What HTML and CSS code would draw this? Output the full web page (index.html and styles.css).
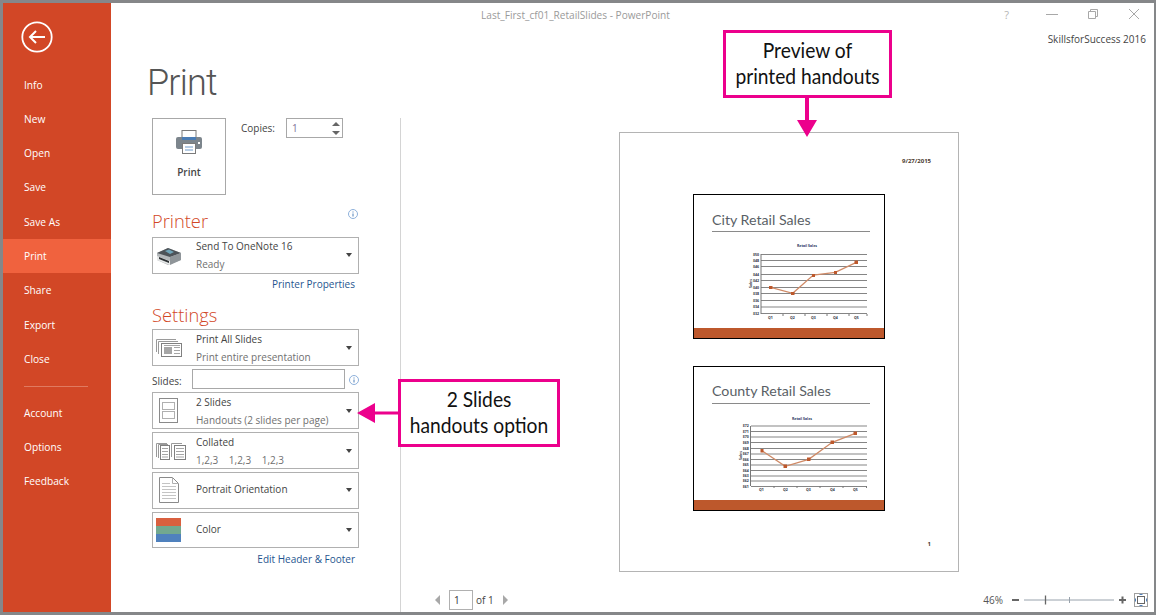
FILE: index.html
```html
<!DOCTYPE html>
<html>

<head>
  <meta charset="utf-8" />
  <title>Print - PowerPoint</title>
  <link rel="stylesheet" href="styles.css">
</head>

<body>
  <div class="window">
    <nav class="sidebar">
      <div class="back">
        <svg width="32" height="32" viewBox="0 0 32 32">
          <circle cx="16" cy="16" r="14.7" fill="none" stroke="#fff" stroke-width="1.8" />
          <path d="M9 16H24M15 10L9 16L15 22" fill="none" stroke="#fff" stroke-width="2" />
        </svg>
      </div>
      <a class="item">Info</a>
      <a class="item">New</a>
      <a class="item">Open</a>
      <a class="item">Save</a>
      <a class="item">Save As</a>
      <a class="item active">Print</a>
      <a class="item">Share</a>
      <a class="item">Export</a>
      <a class="item">Close</a>
      <div class="sep"></div>
      <a class="item">Account</a>
      <a class="item">Options</a>
      <a class="item">Feedback</a>
    </nav>

    <div class="main">
      <div class="titlebar">
        <span class="doc-title">Last_First_cf01_RetailSlides - PowerPoint</span>
        <div class="controls">
          <span class="help">?</span>
          <svg width="12" height="12" viewBox="0 0 12 12"><path d="M0 6.5H12" stroke="#a8a8a8" /></svg>
          <svg width="12" height="12" viewBox="0 0 12 12"><path d="M1.500 3.500H8.500V10.500H1.500ZM3.500 3.500V1.500H10.500V8.500H8.500" fill="none" stroke="#a8a8a8" /></svg>
          <svg width="12" height="12" viewBox="0 0 12 12"><path d="M1 1L11 11M11 1L1 11" stroke="#a8a8a8" /></svg>
        </div>
      </div>
      <div class="account">SkillsforSuccess 2016</div>
      <h1 class="page-title">Print</h1>

      <div class="backstage">
        <div class="panel">
          <div class="print-row">
            <button class="print-btn">
              <svg width="26" height="24" viewBox="0 0 26 24">
                <rect x="6" y="0.500" width="14" height="9" fill="#fff" stroke="#7b7b7b" />
                <rect x="0" y="7" width="26" height="12" rx="2" fill="#7c858c" />
                <rect x="6" y="7" width="14" height="3" fill="#4b7db5" />
                <rect x="6.500" y="13.500" width="13" height="10" fill="#fff" stroke="#7b7b7b" />
                <path d="M9 17H17M9 20H17" stroke="#6f9bcb" />
                <rect x="22" y="12" width="2" height="2" fill="#fff" />
              </svg>
              <span>Print</span>
            </button>
            <div class="copies">
              <label>Copies:</label>
              <div class="spinner">
                <span>1</span>
                <svg width="8" height="15" viewBox="0 0 8 15"><path d="M4 1L8 5H0ZM0 10H8L4 14Z" fill="#666" /></svg>
              </div>
            </div>
          </div>

          <div class="section-title printer-title">
            <span>Printer</span>
            <svg class="info" width="10" height="10" viewBox="0 0 10 10"><circle cx="5" cy="5" r="4.500" fill="none" stroke="#8db0da" /><path d="M5 2.500V3.500M5 4.500V7.500" stroke="#4d7fb8" /></svg>
          </div>
          <div class="dropdown">
            <div class="dd-icon">
              <svg width="26" height="21" viewBox="0 0 26 21">
                <path d="M1 8L12 3L25 8V15L12 20L1 15Z" fill="#b4b8ba" />
                <path d="M1 8L12 3L25 8L14 12Z" fill="#4d5358" />
                <path d="M9 6L13 4.500L18 7L14 9Z" fill="#6fa4b8" />
                <path d="M1 11L14 16V20L1 15Z" fill="#e6e8e8" />
                <path d="M3 12L13 16V18L3 14Z" fill="#2e3235" />
                <path d="M14 12L25 8V15L14 20Z" fill="#8f9599" />
              </svg>
            </div>
            <div class="dd-text">
              <div>Send To OneNote 16</div>
              <div class="sub">Ready</div>
            </div>
            <i class="caret"></i>
          </div>
          <a class="link">Printer Properties</a>

          <div class="section-title settings-title">Settings</div>
          <div class="dropdown">
            <div class="dd-icon">
              <svg width="26" height="18" viewBox="0 0 26 18">
                <path d="M0.500 13V0.500H20M2.500 15V2.500H22" fill="none" stroke="#9a9a9a" />
                <rect x="5.500" y="4.500" width="20" height="13" fill="#fff" stroke="#808080" />
                <rect x="8" y="8" width="8" height="7" fill="#a6a6a6" />
                <path d="M18 8.500H24M18 11.500H24M18 14.500H24" stroke="#a6a6a6" />
                <path d="M8 6.500H24" stroke="#a6a6a6" />
              </svg>
            </div>
            <div class="dd-text">
              <div>Print All Slides</div>
              <div class="sub">Print entire presentation</div>
            </div>
            <i class="caret"></i>
          </div>
          <div class="slides-row">
            <label>Slides:</label>
            <div class="slides-input"></div>
            <svg class="info" width="10" height="10" viewBox="0 0 10 10"><circle cx="5" cy="5" r="4.500" fill="none" stroke="#8db0da" /><path d="M5 2.500V3.500M5 4.500V7.500" stroke="#4d7fb8" /></svg>
          </div>
          <div class="dropdown">
            <div class="dd-icon">
              <svg width="26" height="25" viewBox="0 0 26 25">
                <rect x="3.500" y="0.500" width="18" height="24" fill="#fff" stroke="#8a8a8a" />
                <rect x="6.500" y="4.500" width="12" height="7" fill="#fff" stroke="#b0b0b0" />
                <rect x="6.500" y="13.500" width="12" height="7" fill="#fff" stroke="#b0b0b0" />
              </svg>
            </div>
            <div class="dd-text">
              <div>2 Slides</div>
              <div class="sub">Handouts (2 slides per page)</div>
            </div>
            <i class="caret"></i>
          </div>
          <div class="dropdown">
            <div class="dd-icon">
              <svg width="30" height="18" viewBox="0 0 30 18">
                <path d="M0.500 15V1.500H11M2.500 16V2.500H12" fill="none" stroke="#9a9a9a" />
                <rect x="4.500" y="3.500" width="9" height="14" fill="#fff" stroke="#808080" />
                <path d="M6 6.500H12M6 9.500H12M6 12.500H12M6 15H12" stroke="#a6a6a6" />
                <path d="M15.500 15V1.500H26" fill="none" stroke="#9a9a9a" />
                <rect x="18.500" y="3.500" width="11" height="14" fill="#fff" stroke="#808080" />
                <path d="M20 6.500H28M20 9.500H28M20 12.500H28M20 15H28" stroke="#a6a6a6" />
              </svg>
            </div>
            <div class="dd-text">
              <div>Collated</div>
              <div class="sub collate"><span>1,2,3</span><span>1,2,3</span><span>1,2,3</span></div>
            </div>
            <i class="caret"></i>
          </div>
          <div class="dropdown">
            <div class="dd-icon">
              <svg width="26" height="26" viewBox="0 0 26 26">
                <path d="M3.500 0.500H16.500L22.500 6.500V25.500H3.500Z" fill="#fff" stroke="#8a8a8a" />
                <path d="M16.500 0.500V6.500H22.500" fill="none" stroke="#b0b0b0" />
                <path d="M6 6.500H14M6 9.500H20M6 12.500H20M6 15.500H20M6 18.500H20M6 21.500H20" stroke="#c4c4c4" />
              </svg>
            </div>
            <div class="dd-text single">
              <div>Portrait Orientation</div>
            </div>
            <i class="caret"></i>
          </div>
          <div class="dropdown">
            <div class="dd-icon">
              <div class="swatch"><b class="s1"></b><b class="s2"></b><b class="s3"></b></div>
            </div>
            <div class="dd-text single">
              <div>Color</div>
            </div>
            <i class="caret"></i>
          </div>
          <a class="link">Edit Header &amp; Footer</a>
        </div>

        <div class="preview">
          <div class="sheet">
            <div class="date">9/27/2015</div>

            <div class="slide">
              <div class="slide-title">City Retail Sales</div>
              <svg class="chart chart-a" width="130" height="80" viewBox="0 0 130 80">
                <text class="ct" x="59" y="5" text-anchor="middle">Retail Sales</text>
                <path d="M13 12.500H119M13 18.500H119M13 24.500H119M13 32.500H119M13 38.500H119M13 45.500H119M13 51.500H119M13 58.500H119M13 65H119M13 71.500H119" stroke="#858585" stroke-width="1.200" />
                <path d="M13 12V72M35 72V74M57 72V74M79 72V74M101 72V74M119 72V74" stroke="#777" />
                <g class="cl">
                  <text x="5" y="13.500">$50</text><text x="5" y="19.500">$48</text><text x="5" y="25.500">$46</text><text x="5" y="33.500">$44</text><text x="5" y="39.500">$42</text><text x="5" y="46.500">$40</text><text x="5" y="52.500">$38</text><text x="5" y="59.500">$36</text><text x="5" y="66">$34</text><text x="5" y="72.500">$32</text>
                  <text x="20" y="77">Q1</text><text x="42" y="77">Q2</text><text x="63" y="77">Q3</text><text x="85" y="77">Q4</text><text x="106" y="77">Q5</text>
                  <text transform="translate(3.500 46) rotate(-90)">Sales</text>
                </g>
                <polyline points="22.700,45.300 44.700,51.300 65.300,33 87.300,30.300 108.300,20.300" fill="none" stroke="#d08a66" stroke-width="1.300" />
                <path d="M21 44H24.500V47H21ZM43 50H46.500V53H43ZM64 32H67V35H64ZM86 29H89V32H86ZM106.500 18.500H110V22H106.500Z" fill="#bd582c" />
              </svg>
              <div class="slide-bar"></div>
            </div>

            <div class="slide second">
              <div class="slide-title">County Retail Sales</div>
              <svg class="chart chart-b" width="140" height="80" viewBox="0 0 140 80">
                <text class="ct" x="64" y="6" text-anchor="middle">Retail Sales</text>
                <path d="M13 12H129M13 17.500H129M13 23H129M13 28.500H129M13 34.500H129M13 40H129M13 45.500H129M13 51H129M13 56.500H129M13 62H129M13 67H129M13 72.500H129" stroke="#858585" stroke-width="1.200" />
                <path d="M12.500 12V72M36 72V74M59 72V74M82 72V74M105 72V74M128.500 72V74" stroke="#777" />
                <g class="cl">
                  <text x="4.700" y="13">$72</text><text x="4.700" y="18.500">$71</text><text x="4.700" y="24">$70</text><text x="4.700" y="29.500">$69</text><text x="4.700" y="35.500">$68</text><text x="4.700" y="41">$67</text><text x="4.700" y="46.500">$66</text><text x="4.700" y="52">$65</text><text x="4.700" y="57.500">$64</text><text x="4.700" y="63">$63</text><text x="4.700" y="68">$62</text><text x="4.700" y="73.500">$61</text>
                  <text x="21" y="77">Q1</text><text x="45" y="77">Q2</text><text x="68" y="77">Q3</text><text x="92" y="77">Q4</text><text x="115" y="77">Q5</text>
                  <text transform="translate(4 46) rotate(-90)">Sales</text>
                </g>
                <polyline points="24,36.700 47.300,52.300 70.700,45.300 94.300,28.300 117.300,19.300" fill="none" stroke="#d08a66" stroke-width="1.300" />
                <path d="M22.500 35H25.500V38.500H22.500ZM45.500 50.500H49V54H45.500ZM69 43.500H72.500V47H69ZM92.500 26.500H96V30H92.500ZM115.500 17.500H119V21H115.500Z" fill="#bd582c" />
              </svg>
              <div class="slide-bar"></div>
            </div>

            <div class="page-no">1</div>
          </div>

          <div class="statusbar">
            <div class="pager">
              <i class="tri-left"></i>
              <span class="page-box">1</span>
              <span>of 1</span>
              <i class="tri-right"></i>
            </div>
            <div class="zoom">
              <span class="pct">46%</span>
              <svg width="136" height="14" viewBox="0 0 136 14">
                <path d="M0 7H7M107 7H114M110.500 3.500V10.500" stroke="#666" stroke-width="2" />
                <path d="M12 7H102" stroke="#98a2ac" />
                <path d="M33.500 2.500V11.500" stroke="#666" stroke-width="1.300" />
                <path d="M57.500 4V10" stroke="#98a2ac" />
                <rect x="122.500" y="0.500" width="13" height="13" fill="none" stroke="#a0a0a0" />
                <rect x="125.500" y="3.500" width="7" height="7" fill="#fff" stroke="#666" />
                <path d="M127.500 1.500H130.500M127.500 12.500H130.500M123.500 5.500V8.500M134.500 5.500V8.500" stroke="#4f81bd" />
              </svg>
            </div>
          </div>
        </div>
      </div>
    </div>

    <div class="callout callout-preview"><span>Preview of<br />printed handouts</span></div>
    <svg class="pointer pointer-down" width="20" height="39" viewBox="0 0 20 39"><path d="M8 0H12V22H20L10 39L0 22H8Z" fill="#ec008c" /></svg>
    <div class="callout callout-slides"><span>2 Slides<br />handouts option</span></div>
    <svg class="pointer pointer-left" width="42" height="20" viewBox="0 0 42 20"><path d="M42 8.500V11.500H18V20L0 10L18 0V8.500Z" fill="#ec008c" /></svg>
  </div>
</body>

</html>
```

FILE: styles.css
```css
html,
body {
  margin: 0;
  background-color: #fff;
}

body {
  font-family: "Open Sans", "Noto Sans", sans-serif;
  font-size: 10px;
  color: #444;
  height: 616px;
  overflow: hidden;
}

.window {
  position: relative;
  display: flex;
  box-sizing: border-box;
  height: 615px;
  border: 3px solid #858789;
  border-right-width: 2px;
  background-color: #fff;
}

/* left rail */
.sidebar {
  width: 108px;
  flex: none;
  background-color: #d24726;
  color: #fff;
}

.back {
  height: 64.500px;
  padding: 18px 0 0 18px;
  box-sizing: border-box;
}

.back svg {
  display: block;
}

.item {
  display: block;
  height: 34.300px;
  line-height: 34.300px;
  padding-left: 21px;
  font-size: 10.200px;
}

.item.active {
  background-color: #f0623e;
}

.sep {
  height: 1px;
  margin: 10px 23px 8.500px 21px;
  background-color: #e07a60;
}

/* main area */
.main {
  flex: 1;
  display: flex;
  flex-direction: column;
  min-width: 0;
}

.titlebar {
  height: 24px;
  display: flex;
  align-items: center;
  flex: none;
}

.doc-title {
  margin-left: 370px;
  color: #9a9a9a;
  font-size: 10.100px;
}

.controls {
  margin-left: auto;
  margin-right: 14px;
  margin-top: -2px;
  display: flex;
  align-items: center;
  gap: 29px;
}

.controls svg {
  display: block;
}

.help {
  color: #b5b5b5;
  font-size: 11px;
  margin-right: 8px;
}

.account {
  height: 18px;
  line-height: 24px;
  padding-right: 8px;
  text-align: right;
  font-size: 10px;
  color: #444;
  flex: none;
}

.page-title {
  margin: 0 0 0 36px;
  height: 73px;
  flex: none;
  font-family: "Roboto", "Open Sans", sans-serif;
  font-size: 36px;
  line-height: 76px;
  font-weight: 300;
  letter-spacing: -0.800px;
  color: #555;
}

.backstage {
  flex: 1;
  display: flex;
  min-height: 0;
}

.panel {
  width: 207px;
  flex: none;
  margin: 0 41px;
}

.print-row {
  display: flex;
  gap: 15px;
  height: 77px;
}

.print-btn {
  width: 74px;
  height: 77px;
  box-sizing: border-box;
  border: 1px solid #a8a8a8;
  background-color: #fff;
  padding: 11px 0 0;
  display: flex;
  flex-direction: column;
  align-items: center;
  font-family: inherit;
  font-size: 10px;
  font-weight: 600;
  color: #444;
}

.print-btn span {
  margin-top: 11px;
}

.copies {
  display: flex;
  align-items: center;
  height: 20px;
  gap: 11px;
}

.spinner {
  box-sizing: border-box;
  width: 57px;
  height: 20px;
  border: 1px solid #a8a8a8;
  display: flex;
  align-items: center;
  justify-content: space-between;
  padding: 0 2px 0 5px;
  color: #7d7198;
}

.section-title {
  font-size: 18.300px;
  font-weight: 300;
  line-height: 22px;
  color: #d24726;
}

.printer-title {
  margin-top: 15px;
  margin-bottom: 5px;
  display: flex;
  justify-content: space-between;
  align-items: flex-start;
}

.printer-title .info {
  margin-top: -1px;
  margin-right: 1px;
}

.settings-title {
  margin-top: 13.700px;
  margin-bottom: 3px;
}

.dropdown {
  box-sizing: border-box;
  height: 36.600px;
  margin-bottom: 3.200px;
  border: 1px solid #b0b0b0;
  display: flex;
  align-items: center;
}

.dd-icon {
  width: 43px;
  padding-left: 3px;
  box-sizing: border-box;
  flex: none;
}

.dd-icon svg {
  display: block;
}

.dd-text {
  flex: 1;
  line-height: 18px;
  color: #444;
}

.dd-text.single {
  padding-bottom: 3px;
}

.sub {
  color: #707070;
}

.collate {
  display: flex;
  gap: 10.500px;
}

.caret {
  width: 0;
  height: 0;
  margin-right: 6px;
  border: 3.500px solid transparent;
  border-top: 4px solid #444;
  border-bottom: 0;
}

.swatch {
  width: 25px;
}

.swatch b {
  display: block;
  height: 8px;
}

.s1 {
  background-color: #d9603f;
}

.s2 {
  background-color: #72a88f;
}

.s3 {
  background-color: #4f81bd;
}

.link {
  display: block;
  height: 14px;
  line-height: 14px;
  padding-right: 4px;
  text-align: right;
  color: #1f5590;
}

.slides-row {
  display: flex;
  align-items: center;
  height: 20px;
  margin-bottom: 3.200px;
}

.slides-row label {
  width: 40px;
  margin-top: 4px;
}

.slides-row .info {
  margin-top: 1px;
}

.slides-input {
  box-sizing: border-box;
  width: 153px;
  height: 20px;
  border: 1px solid #a8a8a8;
  margin-right: 4px;
}

/* print preview */
.preview {
  flex: 1;
  display: flex;
  flex-direction: column;
  border-left: 1px solid #d4d4d4;
  min-width: 0;
}

.sheet {
  box-sizing: border-box;
  width: 340px;
  height: 440px;
  margin: 14px 0 0 218px;
  border: 1px solid #b4b4b4;
  padding: 25px 27px 0 73px;
  flex: none;
}

.date,
.page-no {
  text-align: right;
  font-size: 6px;
  font-weight: 700;
  line-height: 6px;
  color: #4a3a30;
}

.date {
  margin-bottom: 30px;
}

.page-no {
  margin-top: 30px;
}

.slide {
  box-sizing: border-box;
  width: 192px;
  height: 145px;
  border: 1px solid #000;
  display: flex;
  flex-direction: column;
  position: relative;
}

.second {
  margin-top: 27px;
}

.slide-title {
  margin: 15px 14px 0 18px;
  height: 21px;
  line-height: 20px;
  border-bottom: 1px solid #8a8a8a;
  font-family: "Lato", sans-serif;
  font-size: 14.200px;
  color: #5a5f66;
}

.second .slide-title {
  line-height: 18px;
}

.chart {
  display: block;
}

.chart-a {
  margin: 10px 0 0 54px;
}

.chart-b {
  margin: 10px 0 0 44px;
}

.ct {
  font-size: 3.500px;
  font-weight: 700;
  fill: #1f3864;
}

.cl text {
  font-size: 3.500px;
  font-weight: 700;
  fill: #2a2f3a;
}

.slide-bar {
  margin-top: auto;
  height: 10px;
  background-color: #bd582c;
}

.statusbar {
  flex: 1;
  display: flex;
  align-items: center;
  justify-content: space-between;
  padding: 16px 6px 0 34px;
}

.pager {
  display: flex;
  align-items: center;
}

.page-box {
  box-sizing: border-box;
  width: 24px;
  height: 20px;
  line-height: 18px;
  border: 1px solid #b0b0b0;
  padding-left: 4px;
  margin: 0 3px 0 9px;
  color: #333;
}

.tri-left {
  border: 5px solid transparent;
  border-left: 0;
  border-right: 5px solid #a8a8a8;
}

.tri-right {
  border: 5px solid transparent;
  border-right: 0;
  border-left: 5px solid #a8a8a8;
  margin-left: 9px;
}

.zoom {
  display: flex;
  align-items: center;
  gap: 9px;
}

.zoom svg {
  display: block;
}

.pct {
  color: #555;
}

/* annotations over the screenshot */
.callout {
  position: absolute;
  box-sizing: border-box;
  border: 3px solid #ec008c;
  background-color: #fff;
  color: #111;
  font-family: "Lato", sans-serif;
  font-size: 21px;
  line-height: 26px;
  text-align: center;
  height: 68px;
  padding-top: 4px;
}

.callout span {
  display: block;
  white-space: nowrap;
  transform: scaleX(0.915);
}

.callout-preview {
  left: 720px;
  top: 27px;
  width: 169px;
}

.callout-slides {
  left: 395px;
  top: 376px;
  width: 162px;
}

.pointer {
  position: absolute;
  display: block;
}

.pointer-down {
  left: 794px;
  top: 95px;
}

.pointer-left {
  left: 354px;
  top: 400px;
}
```
